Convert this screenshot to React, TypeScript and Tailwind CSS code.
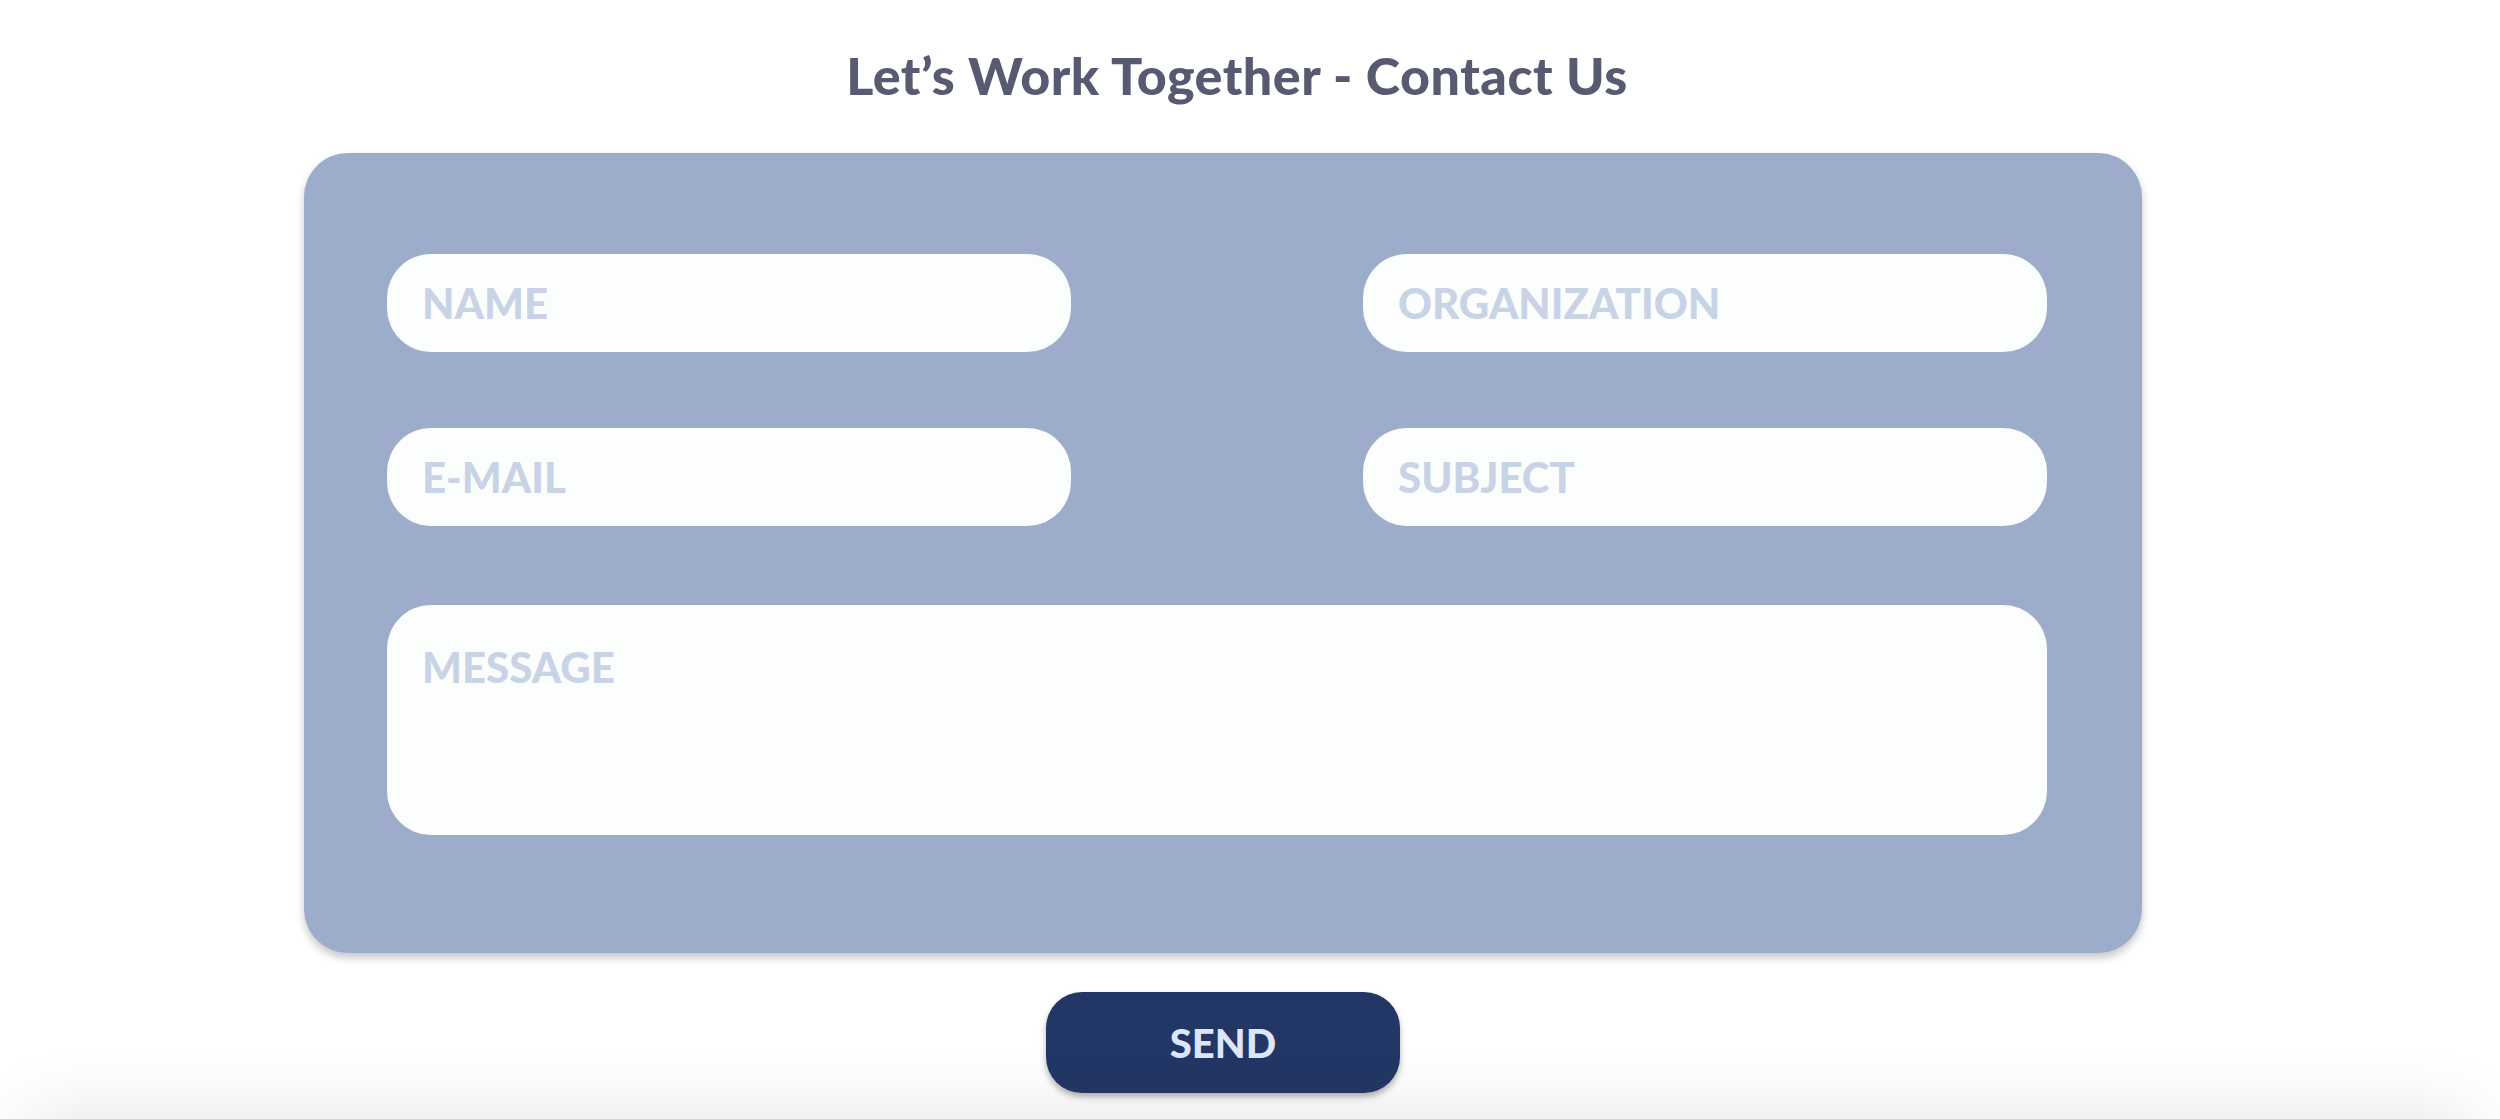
import { useState } from "react";

const inputClass =
  "w-full h-[98px] rounded-[44px] bg-[#fcfefd] pl-[35px] pr-[35px] text-[42px] font-black text-[#5d6480] placeholder:text-[#c8d3e6] outline-none";

export default function App() {
  const [form, setForm] = useState({
    name: "",
    organization: "",
    email: "",
    subject: "",
    message: "",
  });

  const update =
    (key: keyof typeof form) =>
    (e: React.ChangeEvent<HTMLInputElement | HTMLTextAreaElement>) =>
      setForm({ ...form, [key]: e.target.value });

  return (
    <div
      className="h-[1119px] overflow-hidden bg-white flex flex-col"
      style={{ fontFamily: "Lato, 'Open Sans', sans-serif" }}
    >
      <div className="flex flex-col items-center pr-[54px]">
        {/* HEADING */}
        <h1 className="pt-[44px] pl-[28px] text-[52px] leading-[1.2] font-black tracking-[0.5px] text-[#575a70]">
          Let’s Work Together - Contact Us
        </h1>

        {/* FORM CARD */}
        <form
          onSubmit={(e) => e.preventDefault()}
          className="mt-[47px] w-[1838px] rounded-[44px] bg-[#9cacca] pl-[83px] pr-[95px] pt-[101px] pb-[118px] shadow-[0_5px_8px_rgba(0,0,0,0.22)]"
        >
          <div className="grid grid-cols-2 gap-x-[292px] gap-y-[76px]">
            <input
              className={inputClass}
              placeholder="NAME"
              value={form.name}
              onChange={update("name")}
            />
            <input
              className={inputClass}
              placeholder="ORGANIZATION"
              value={form.organization}
              onChange={update("organization")}
            />
            <input
              className={inputClass}
              placeholder="E-MAIL"
              value={form.email}
              onChange={update("email")}
            />
            <input
              className={inputClass}
              placeholder="SUBJECT"
              value={form.subject}
              onChange={update("subject")}
            />
          </div>

          <textarea
            className="mt-[79px] block w-full h-[230px] resize-none rounded-[44px] bg-[#fcfefd] px-[35px] pt-[37px] text-[42px] leading-[1.2] font-black text-[#5d6480] placeholder:text-[#c8d3e6] outline-none"
            placeholder="MESSAGE"
            value={form.message}
            onChange={update("message")}
          />
        </form>

        {/* SEND */}
        <button className="mt-[39px] w-[354px] h-[101px] rounded-[36px] bg-[#233766] text-[40px] font-black text-[#dde6fa] shadow-[0_4px_6px_rgba(0,0,0,0.3)]">
          SEND
        </button>
      </div>

      {/* FOOTER (sits just below the fold) */}
      <footer className="mt-[27px] mx-[30px] h-[200px] shrink-0 bg-white shadow-[0_0_80px_rgba(0,0,0,0.12)]" />
    </div>
  );
}
